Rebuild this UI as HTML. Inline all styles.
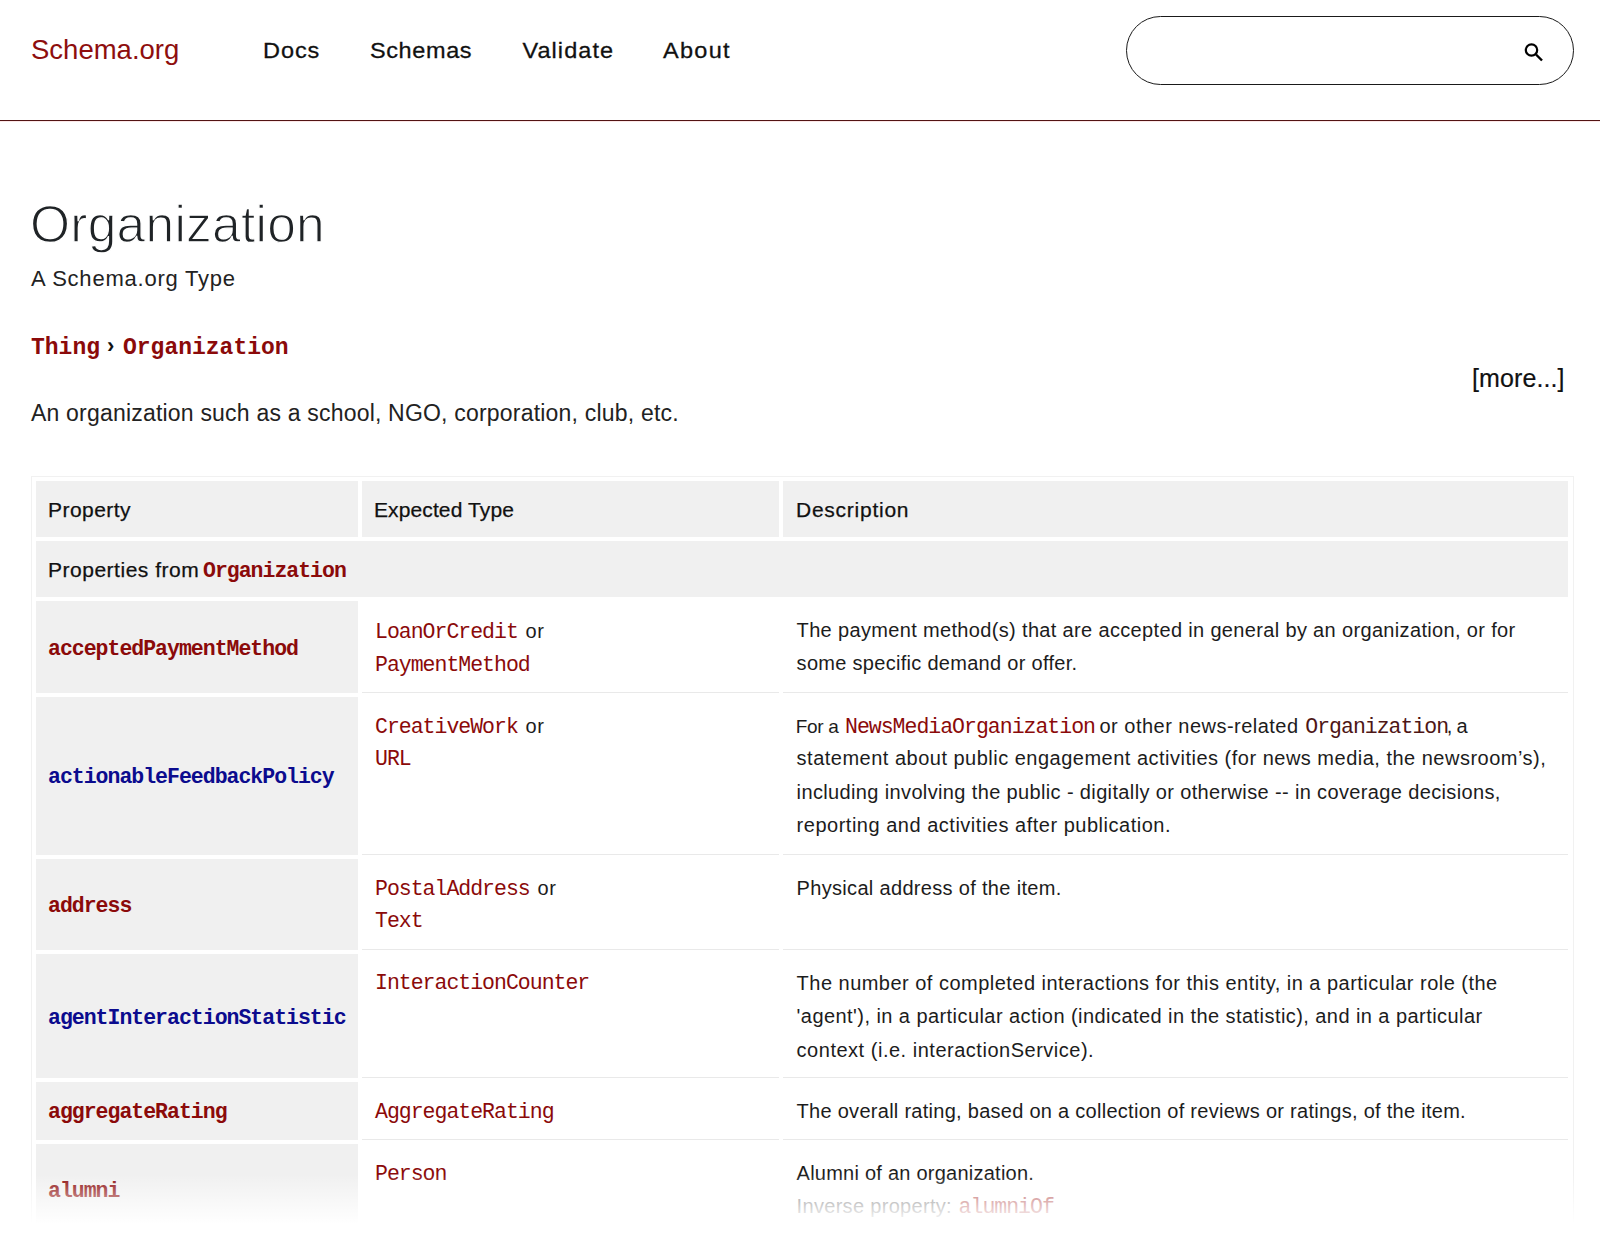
<!DOCTYPE html>
<html>
<head>
<meta charset="utf-8">
<style>
html,body{margin:0;padding:0;background:#fff;}
body{width:1600px;height:1240px;position:relative;overflow:hidden;font-family:"Liberation Sans",sans-serif;color:#111;}
.a{position:absolute;white-space:pre;line-height:1;}
.L{position:absolute;white-space:pre;line-height:0;}
.L span{line-height:0;}
#logo{left:31px;top:36.3px;font-size:27.5px;color:#8e0e0e;}
.nav{top:39.3px;font-size:23.5px;color:#111;letter-spacing:0.5px;transform:scaleY(0.93);transform-origin:0 19px;-webkit-text-stroke:0.3px #111;}
#search{position:absolute;left:1126px;top:16px;width:446px;height:67px;border:1px solid #1a1a1a;border-radius:36px;}
#hline{position:absolute;left:0;top:120px;width:1600px;height:1px;background:#521414;box-shadow:0 1px 0 #fce8e8;}
#h1{left:30px;top:199px;font-size:51.5px;letter-spacing:0.25px;color:#1f2326;-webkit-text-stroke:1.3px #fff;}
#sub{left:31px;top:268px;font-size:22px;color:#222;letter-spacing:0.78px;}
#more{left:1472px;top:366px;font-size:25px;color:#111;letter-spacing:0.1px;-webkit-text-stroke:0.2px #111;}
#desc{left:31px;top:401.8px;font-size:23px;color:#222;letter-spacing:0.2px;}
.crumb{position:absolute;white-space:pre;line-height:1;font-family:"Liberation Mono",monospace;font-size:23px;font-weight:bold;color:#8b0a0a;top:336.9px;}
#tbl{position:absolute;left:31px;top:476px;width:1543px;height:800px;border:1px solid #f1f1f1;box-sizing:border-box;}
.c{position:absolute;box-sizing:border-box;}
.g{background:#f0f0f0;}
.w{border-bottom:1px solid #e9e9e9;}
#fade{position:absolute;left:0;top:1174px;width:1600px;height:66px;background:linear-gradient(to bottom,rgba(255,255,255,0) 0px,rgba(255,255,255,1) 50px);}
</style>
</head>
<body>
<div id="logo" class="a">Schema.org</div>
<div class="a nav" style="left:263px;letter-spacing:0.93px">Docs</div>
<div class="a nav" style="left:370px;letter-spacing:0.6px">Schemas</div>
<div class="a nav" style="left:522.5px;letter-spacing:1.05px">Validate</div>
<div class="a nav" style="left:663px;letter-spacing:1.3px">About</div>
<div id="search"></div>
<svg style="position:absolute;left:1520px;top:40px" width="26" height="26" viewBox="0 0 26 26"><circle cx="11.5" cy="10" r="5.7" fill="none" stroke="#000" stroke-width="2.2"/><line x1="16" y1="14.5" x2="22" y2="20.5" stroke="#000" stroke-width="2.4"/></svg>
<div id="hline"></div>
<div id="h1" class="a">Organization</div>
<div id="sub" class="a">A Schema.org Type</div>
<div class="crumb" style="left:31px">Thing</div>
<div class="a" style="left:107px;top:335px;font-size:22px;font-weight:bold;color:#111">›</div>
<div class="crumb" style="left:123px">Organization</div>
<div id="more" class="a">[more...]</div>
<div id="desc" class="a">An organization such as a school, NGO, corporation, club, etc.</div>
<div id="tbl"></div>

<div class="c g" style="left:36px;top:481px;width:322px;height:56px"></div>
<div class="c g" style="left:362px;top:481px;width:417px;height:56px"></div>
<div class="c g" style="left:783px;top:481px;width:785px;height:56px"></div>
<div class="c g" style="left:36px;top:541px;width:1532px;height:56px"></div>
<div class="c g" style="left:36px;top:601px;width:322px;height:92px"></div>
<div class="c w" style="left:362px;top:601px;width:417px;height:92px"></div>
<div class="c w" style="left:783px;top:601px;width:785px;height:92px"></div>
<div class="c g" style="left:36px;top:697px;width:322px;height:158px"></div>
<div class="c w" style="left:362px;top:697px;width:417px;height:158px"></div>
<div class="c w" style="left:783px;top:697px;width:785px;height:158px"></div>
<div class="c g" style="left:36px;top:859px;width:322px;height:91px"></div>
<div class="c w" style="left:362px;top:859px;width:417px;height:91px"></div>
<div class="c w" style="left:783px;top:859px;width:785px;height:91px"></div>
<div class="c g" style="left:36px;top:954px;width:322px;height:124px"></div>
<div class="c w" style="left:362px;top:954px;width:417px;height:124px"></div>
<div class="c w" style="left:783px;top:954px;width:785px;height:124px"></div>
<div class="c g" style="left:36px;top:1082px;width:322px;height:58px"></div>
<div class="c w" style="left:362px;top:1082px;width:417px;height:58px"></div>
<div class="c w" style="left:783px;top:1082px;width:785px;height:58px"></div>
<div class="c g" style="left:36px;top:1144px;width:322px;height:92px"></div>
<div class="c w" style="left:362px;top:1144px;width:417px;height:92px"></div>
<div class="c w" style="left:783px;top:1144px;width:785px;height:92px"></div>
<div class="L" id="th0" style="left:48px;top:509.50px;font-family:'Liberation Sans', sans-serif;font-size:21px;color:#111;-webkit-text-stroke:0.25px #111;letter-spacing:0.443px;"><span>Property</span></div>
<div class="L" id="th1" style="left:374px;top:509.50px;font-family:'Liberation Sans', sans-serif;font-size:21px;color:#111;-webkit-text-stroke:0.25px #111;letter-spacing:0.110px;"><span>Expected Type</span></div>
<div class="L" id="th2" style="left:796px;top:509.50px;font-family:'Liberation Sans', sans-serif;font-size:21px;color:#111;-webkit-text-stroke:0.25px #111;letter-spacing:0.750px;"><span>Description</span></div>
<div class="L" id="p0" style="left:48px;top:569.50px;font-family:'Liberation Sans', sans-serif;font-size:21px;color:#111;-webkit-text-stroke:0.25px #111;letter-spacing:0.514px;"><span>Properties from</span></div>
<div class="L" id="p0m" style="left:203px;top:571.00px;font-family:'Liberation Mono', monospace;font-size:21.5px;font-weight:bold;letter-spacing:-1.0px;color:#8b0a0a;"><span>Organization</span></div>
<div class="L" id="r2c1" style="left:48px;top:649.00px;font-family:'Liberation Mono', monospace;font-size:21.5px;font-weight:bold;letter-spacing:-1.0px;color:#8b0a0a;"><span>acceptedPaymentMethod</span></div>
<div class="L" id="r2a" style="left:375px;top:631.50px;font-family:'Liberation Mono', monospace;font-size:21.5px;letter-spacing:-1.0px;color:#8b0a0a;"><span>LoanOrCredit</span></div>
<div class="L" id="r2ao" style="left:525.5px;top:630.50px;font-family:'Liberation Sans', sans-serif;font-size:20px;color:#1c1c1c;letter-spacing:0.750px;"><span>or</span></div>
<div class="L" id="r2b" style="left:375px;top:664.70px;font-family:'Liberation Mono', monospace;font-size:21.5px;letter-spacing:-1.0px;color:#8b0a0a;"><span>PaymentMethod</span></div>
<div class="L" id="r2d0" style="left:796.6px;top:630.20px;font-family:'Liberation Sans', sans-serif;font-size:20px;color:#1c1c1c;letter-spacing:0.342px;"><span>The payment method(s) that are accepted in general by an organization, or for</span></div>
<div class="L" id="r2d1" style="left:796.6px;top:663.40px;font-family:'Liberation Sans', sans-serif;font-size:20px;color:#1c1c1c;letter-spacing:0.292px;"><span>some specific demand or offer.</span></div>
<div class="L" id="r3c1" style="left:48px;top:776.80px;font-family:'Liberation Mono', monospace;font-size:21.5px;font-weight:bold;letter-spacing:-1.0px;color:#0b0b8e;"><span>actionableFeedbackPolicy</span></div>
<div class="L" id="r3a" style="left:375px;top:726.70px;font-family:'Liberation Mono', monospace;font-size:21.5px;letter-spacing:-1.0px;color:#8b0a0a;"><span>CreativeWork</span></div>
<div class="L" id="r3ao" style="left:525.5px;top:725.70px;font-family:'Liberation Sans', sans-serif;font-size:20px;color:#1c1c1c;letter-spacing:0.750px;"><span>or</span></div>
<div class="L" id="r3b" style="left:375px;top:759.30px;font-family:'Liberation Mono', monospace;font-size:21.5px;letter-spacing:-1.0px;color:#8b0a0a;"><span>URL</span></div>
<div class="L" id="r3d0a" style="left:795.7px;top:727.25px;font-family:'Liberation Sans', sans-serif;font-size:19px;color:#1c1c1c;letter-spacing:-0.300px;"><span>For a</span></div>
<div class="L" id="r3d0b" style="left:845px;top:726.75px;font-family:'Liberation Mono', monospace;font-size:21.5px;letter-spacing:-1.0px;color:#8b0a0a;"><span>NewsMediaOrganization</span></div>
<div class="L" id="r3d0c" style="left:1099.5px;top:725.75px;font-family:'Liberation Sans', sans-serif;font-size:20px;color:#1c1c1c;letter-spacing:0.480px;"><span>or other news-related</span></div>
<div class="L" id="r3d0d" style="left:1305.3px;top:726.75px;font-family:'Liberation Mono', monospace;font-size:21.5px;letter-spacing:-1.0px;color:#4e1616;"><span>Organization</span></div>
<div class="L" id="r3d0e" style="left:1446.8px;top:725.75px;font-family:'Liberation Sans', sans-serif;font-size:20px;color:#1c1c1c;letter-spacing:-0.700px;"><span>, a</span></div>
<div class="L" id="r3d1" style="left:796.6px;top:758.30px;font-family:'Liberation Sans', sans-serif;font-size:20px;color:#1c1c1c;letter-spacing:0.494px;"><span>statement about public engagement activities (for news media, the newsroom’s),</span></div>
<div class="L" id="r3d2" style="left:796.6px;top:791.50px;font-family:'Liberation Sans', sans-serif;font-size:20px;color:#1c1c1c;letter-spacing:0.363px;"><span>including involving the public - digitally or otherwise -- in coverage decisions,</span></div>
<div class="L" id="r3d3" style="left:796.6px;top:825.10px;font-family:'Liberation Sans', sans-serif;font-size:20px;color:#1c1c1c;letter-spacing:0.512px;"><span>reporting and activities after publication.</span></div>
<div class="L" id="r4c1" style="left:48px;top:906.00px;font-family:'Liberation Mono', monospace;font-size:21.5px;font-weight:bold;letter-spacing:-1.0px;color:#8b0a0a;"><span>address</span></div>
<div class="L" id="r4a" style="left:375px;top:888.50px;font-family:'Liberation Mono', monospace;font-size:21.5px;letter-spacing:-1.0px;color:#8b0a0a;"><span>PostalAddress</span></div>
<div class="L" id="r4ao" style="left:537.5px;top:887.50px;font-family:'Liberation Sans', sans-serif;font-size:20px;color:#1c1c1c;letter-spacing:0.700px;"><span>or</span></div>
<div class="L" id="r4b" style="left:375px;top:921.45px;font-family:'Liberation Mono', monospace;font-size:21.5px;letter-spacing:-1.0px;color:#8b0a0a;"><span>Text</span></div>
<div class="L" id="r4d0" style="left:796.6px;top:888.00px;font-family:'Liberation Sans', sans-serif;font-size:20px;color:#1c1c1c;letter-spacing:0.321px;"><span>Physical address of the item.</span></div>
<div class="L" id="r5c1" style="left:48px;top:1017.60px;font-family:'Liberation Mono', monospace;font-size:21.5px;font-weight:bold;letter-spacing:-1.0px;color:#0b0b8e;"><span>agentInteractionStatistic</span></div>
<div class="L" id="r5a" style="left:375px;top:983.25px;font-family:'Liberation Mono', monospace;font-size:21.5px;letter-spacing:-1.0px;color:#8b0a0a;"><span>InteractionCounter</span></div>
<div class="L" id="r5d0" style="left:796.6px;top:982.70px;font-family:'Liberation Sans', sans-serif;font-size:20px;color:#1c1c1c;letter-spacing:0.479px;"><span>The number of completed interactions for this entity, in a particular role (the</span></div>
<div class="L" id="r5d1" style="left:796.6px;top:1016.00px;font-family:'Liberation Sans', sans-serif;font-size:20px;color:#1c1c1c;letter-spacing:0.436px;"><span>'agent'), in a particular action (indicated in the statistic), and in a particular</span></div>
<div class="L" id="r5d2" style="left:796.6px;top:1049.90px;font-family:'Liberation Sans', sans-serif;font-size:20px;color:#1c1c1c;letter-spacing:0.514px;"><span>context (i.e. interactionService).</span></div>
<div class="L" id="r6c1" style="left:48px;top:1112.10px;font-family:'Liberation Mono', monospace;font-size:21.5px;font-weight:bold;letter-spacing:-1.0px;color:#8b0a0a;"><span>aggregateRating</span></div>
<div class="L" id="r6a" style="left:375px;top:1111.90px;font-family:'Liberation Mono', monospace;font-size:21.5px;letter-spacing:-1.0px;color:#8b0a0a;"><span>AggregateRating</span></div>
<div class="L" id="r6d0" style="left:796.6px;top:1110.90px;font-family:'Liberation Sans', sans-serif;font-size:20px;color:#1c1c1c;letter-spacing:0.276px;"><span>The overall rating, based on a collection of reviews or ratings, of the item.</span></div>
<div class="L" id="r7c1" style="left:48px;top:1190.90px;font-family:'Liberation Mono', monospace;font-size:21.5px;font-weight:bold;letter-spacing:-1.0px;color:#8b0a0a;"><span>alumni</span></div>
<div class="L" id="r7a" style="left:375px;top:1174.00px;font-family:'Liberation Mono', monospace;font-size:21.5px;letter-spacing:-1.0px;color:#8b0a0a;"><span>Person</span></div>
<div class="L" id="r7d0" style="left:796.6px;top:1173.00px;font-family:'Liberation Sans', sans-serif;font-size:20px;color:#1c1c1c;letter-spacing:0.240px;"><span>Alumni of an organization.</span></div>
<div class="L" id="r7d1a" style="left:796.6px;top:1206.00px;font-family:'Liberation Sans', sans-serif;font-size:20px;color:#7c7c7c;letter-spacing:0.312px;"><span>Inverse property:</span></div>
<div class="L" id="r7d1b" style="left:958.6px;top:1207.00px;font-family:'Liberation Mono', monospace;font-size:21.5px;letter-spacing:-1.0px;color:#b85656;"><span>alumniOf</span></div>
<div id="fade"></div>
</body>
</html>
